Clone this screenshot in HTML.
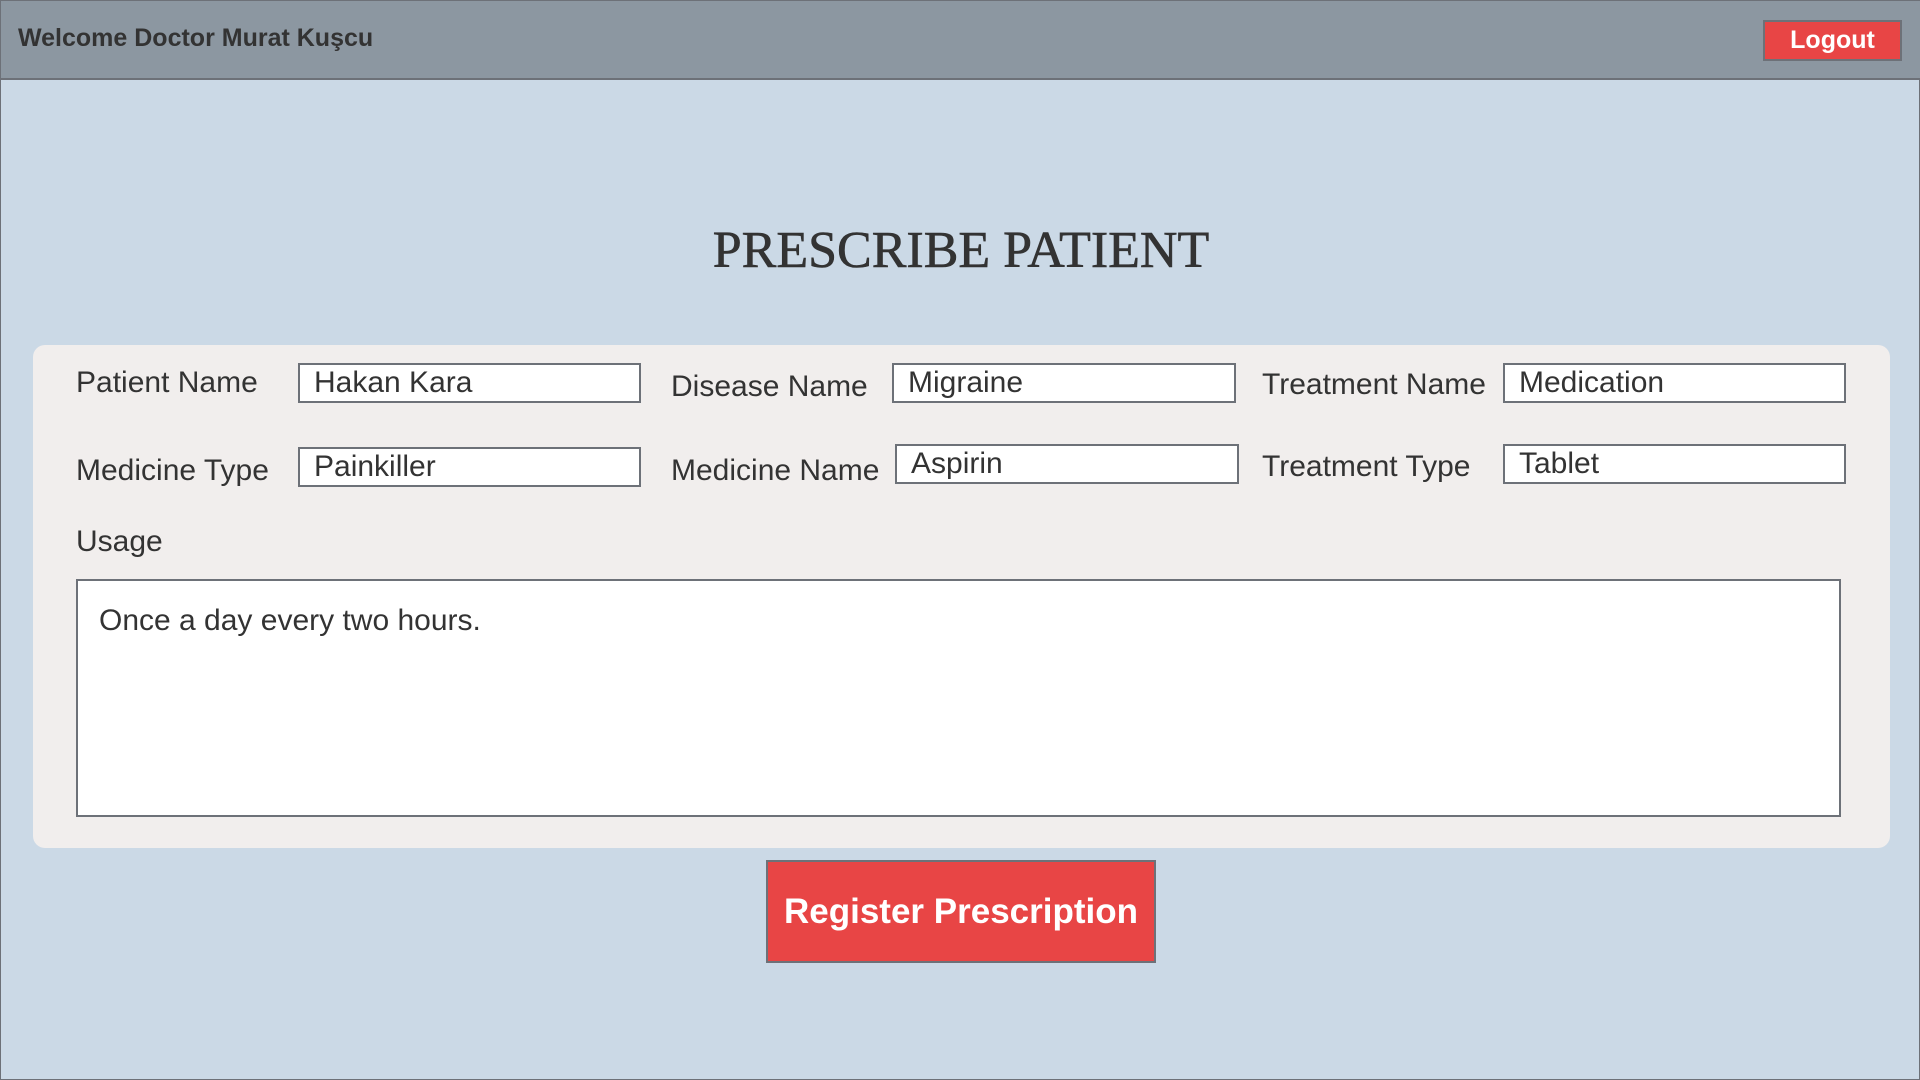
<!DOCTYPE html>
<html><head><meta charset="utf-8"><style>
*{box-sizing:border-box;margin:0;padding:0}
body{width:1920px;height:1080px;background:#cbd9e6;font-family:"Liberation Sans",Arial,sans-serif;position:relative;overflow:hidden;border:1px solid #6d7178}
.hdr{position:absolute;left:0;top:0;width:1920px;height:79px;background:#8c97a1;border-bottom:2px solid #6d7178}
.hdr .w{position:absolute;left:17px;top:23px;font-weight:bold;font-size:25px;color:#333}
.logout{position:absolute;left:1762px;top:19px;width:139px;height:41px;background:#e84545;border:2px solid #6d7178;color:#fff;font-weight:bold;font-size:25px;text-align:center;line-height:37px}
h1{position:absolute;left:0;width:1920px;top:220px;text-align:center;font-family:"Liberation Serif",serif;font-weight:normal;font-size:52px;letter-spacing:0;color:#333;-webkit-text-stroke:0.6px #333}
.panel{position:absolute;left:32px;top:344px;width:1857px;height:503px;background:#f1eeed;border-radius:12px}
.l{position:absolute;font-size:30px;color:#333;line-height:1}
.i{position:absolute;background:#fff;border:2px solid #6d7178;font-size:30px;color:#333;padding-left:14px;line-height:36px;height:40px}
.ta{position:absolute;left:75px;top:578px;width:1765px;height:238px;background:#fff;border:2px solid #6d7178;font-size:30px;color:#333;padding:23px 0 0 21px}
.btn{position:absolute;left:765px;top:859px;width:390px;height:103px;background:#e84545;border:2px solid #6d7178;color:#fff;font-weight:bold;font-size:35px;text-align:center;line-height:99px}
</style></head><body>
<div class="hdr"><div class="w">Welcome Doctor Murat Kuşcu</div><div class="logout">Logout</div></div>
<h1>PRESCRIBE PATIENT</h1>
<div class="panel"></div>
<div class="l" style="left:75px;top:367px">Patient Name</div>
<div class="i" style="left:297px;top:362px;width:343px">Hakan Kara</div>
<div class="l" style="left:670px;top:371px">Disease Name</div>
<div class="i" style="left:891px;top:362px;width:344px">Migraine</div>
<div class="l" style="left:1261px;top:369px">Treatment Name</div>
<div class="i" style="left:1502px;top:362px;width:343px">Medication</div>
<div class="l" style="left:75px;top:455px">Medicine Type</div>
<div class="i" style="left:297px;top:446px;width:343px">Painkiller</div>
<div class="l" style="left:670px;top:455px">Medicine Name</div>
<div class="i" style="left:894px;top:443px;width:344px">Aspirin</div>
<div class="l" style="left:1261px;top:451px">Treatment Type</div>
<div class="i" style="left:1502px;top:443px;width:343px">Tablet</div>
<div class="l" style="left:75px;top:526px">Usage</div>
<div class="ta">Once a day every two hours.</div>
<div class="btn">Register Prescription</div>
</body></html>
